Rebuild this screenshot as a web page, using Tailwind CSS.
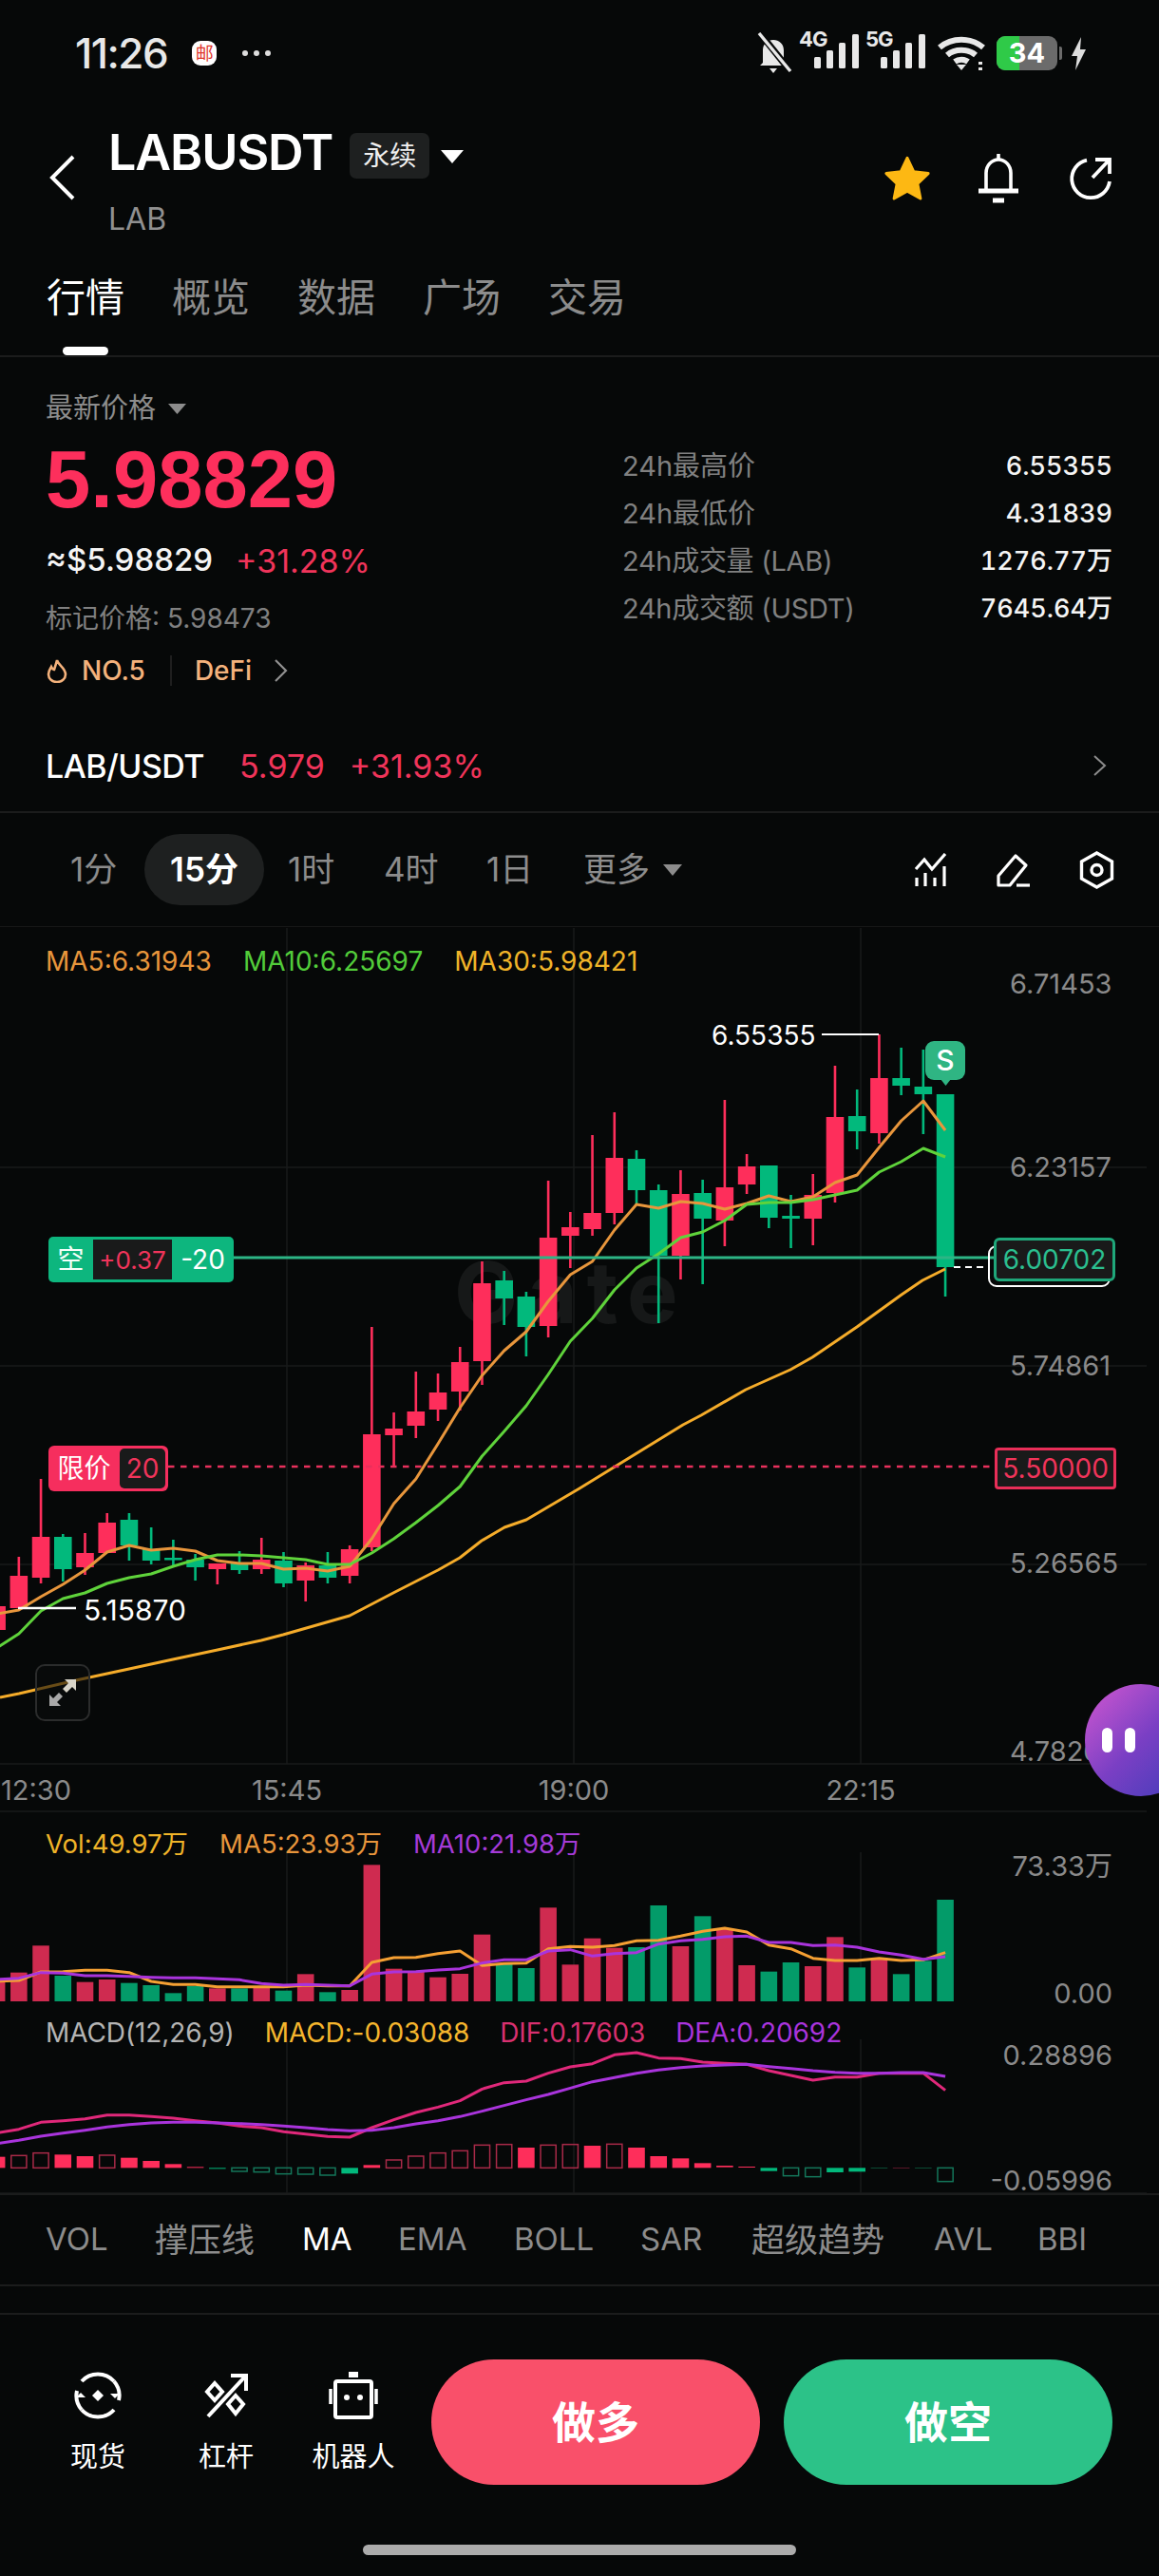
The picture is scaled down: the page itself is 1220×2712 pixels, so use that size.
<!DOCTYPE html>
<html lang="zh">
<head>
  <meta charset="UTF-8">
  <meta name="viewport" content="width=device-width, initial-scale=1.0">
  <title>LABUSDT</title>
  <script src="https://cdn.jsdelivr.net/npm/@tailwindcss/browser@4"></script>
</head>
<body class="bg-[#060808]">
  <div class="relative w-[1220px] h-[2712px] overflow-hidden bg-[#060808] text-white font-[Inter,'Noto_Sans_CJK_SC',sans-serif]">

    <!-- status bar -->
    <div class="flex items-center h-[112px] pl-[79px] pr-[76px]">
      <span class="text-[44px] font-medium tracking-[-1.5px] text-[#e8e8e8]">11:26</span>
      <span class="ml-[26px] flex items-center justify-center w-[26px] h-[26px] rounded-[9px] bg-white text-[#e0352b] text-[19px] leading-none">邮</span>
      <svg class="ml-[26px]" width="32" height="8" viewBox="0 0 32 8" fill="#ddd"><circle cx="4" cy="4" r="3"/><circle cx="16" cy="4" r="3"/><circle cx="28" cy="4" r="3"/></svg>
      <div class="ml-auto flex items-center">
        <svg width="40" height="44" viewBox="0 0 40 44" fill="none" stroke="#e8e8e8">
          <path d="M7 32V19c0-7 5-11 11-11s11 4 11 11v13l3 3H4z" fill="#e8e8e8" stroke="none"/>
          <path d="M14 38h8l-4 5z" fill="#e8e8e8" stroke="none"/>
          <path d="M4 1l32 40" stroke="#060808" stroke-width="7"/>
          <path d="M3 1l33 40" stroke-width="3.4"/>
        </svg>
        <div class="relative ml-[5px] w-[63px] h-[40px]">
          <span class="absolute left-0 top-[-6px] text-[22px] font-bold leading-none tracking-[-1px] text-[#e8e8e8]">4G</span>
          <svg class="absolute left-[16px] top-0" width="48" height="36" viewBox="0 0 48 36" fill="#e8e8e8"><rect x="0" y="24" width="7" height="12" rx="1.5"/><rect x="13" y="17" width="7" height="19" rx="1.5"/><rect x="26" y="9" width="7" height="27" rx="1.5"/><rect x="40" y="0" width="7" height="36" rx="1.5"/></svg>
        </div>
        <div class="relative ml-[7px] w-[63px] h-[40px]">
          <span class="absolute left-0 top-[-6px] text-[22px] font-bold leading-none tracking-[-1px] text-[#e8e8e8]">5G</span>
          <svg class="absolute left-[16px] top-0" width="48" height="36" viewBox="0 0 48 36" fill="#e8e8e8"><rect x="0" y="24" width="7" height="12" rx="1.5"/><rect x="13" y="17" width="7" height="19" rx="1.5"/><rect x="26" y="9" width="7" height="27" rx="1.5"/><rect x="40" y="0" width="7" height="36" rx="1.5"/></svg>
        </div>
        <svg class="ml-[11px]" width="54" height="36" viewBox="0 0 52 36" fill="none" stroke="#e8e8e8" stroke-width="6">
          <path d="M3 12c13-11 33-11 46 0"/>
          <path d="M11 20c8-7 22-7 30 0"/>
          <path d="M19 27c4-3 10-3 14 0"/>
          <path d="M26 36l-5-6h10z" fill="#e8e8e8" stroke="none"/>
          <path d="M46 27v3M46 33v3" stroke-width="4"/>
        </svg>
        <div class="relative ml-[10px] w-[64px] h-[36px] rounded-[9px] bg-[#6b6b6b] overflow-hidden">
          <div class="h-full w-[24px] bg-[#2fca48]"></div>
          <span class="absolute inset-0 flex items-center justify-center text-[29px] font-bold text-white">34</span>
        </div>
        <div class="w-[3px] h-[14px] ml-[2px] rounded-r-[2px] bg-[#6b6b6b]"></div>
        <svg class="ml-[9px]" width="17" height="35" viewBox="0 0 17 35" fill="#ddd"><path d="M11 0L1 20h6L5 35 16 13h-6z"/></svg>
      </div>
    </div>

    <!-- title row -->
    <div class="relative h-[144px]">
      <svg class="absolute left-[50px] top-[50px]" width="32" height="50" viewBox="0 0 32 50" fill="none" stroke="white" stroke-width="4"><path d="M27 3L5 25l22 22"/></svg>
      <div class="absolute right-[49px] top-[50px] flex items-center">
        <svg width="52" height="50" viewBox="0 0 24 23" fill="#fdb813" stroke="#fdb813" stroke-width="1.4" stroke-linejoin="round"><path d="M12 1.5l3.1 6.6 7.1.9-5.2 5 1.4 7.2-6.4-3.6-6.4 3.6 1.4-7.2-5.2-5 7.1-.9z"/></svg>
        <svg class="ml-[48px]" width="44" height="52" viewBox="0 0 44 52" fill="none" stroke="white" stroke-width="3.6"><path d="M22 0v6"/><path d="M9 38V20a13 14 0 0 1 26 0v18"/><path d="M1 39h42" stroke-width="5"/><path d="M16 49h12" stroke-width="5"/></svg>
        <svg class="ml-[52px]" width="46" height="46" viewBox="0 0 46 46" fill="none" stroke="white" stroke-width="3.8"><path d="M19 3.6A20 20 0 1 0 43 26"/><path d="M25 22L42 4"/><path d="M28 3h15v15"/></svg>
      </div>
      <div class="flex items-start pl-[114px]">
        <div class="pt-[19px]">
          <div class="text-[52px] leading-[60px] font-semibold tracking-[-1.1px]">LABUSDT</div>
          <div class="mt-[20px] text-[32px] leading-[40px] text-[#909090]">LAB</div>
        </div>
        <div class="ml-[18px] mt-[28px] flex items-center justify-center w-[84px] h-[48px] rounded-[7px] bg-[#1e2020] text-[28px] text-[#f0f0f0]">永续</div>
        <svg class="ml-[12px] mt-[46px]" width="24" height="14" viewBox="0 0 24 14" fill="white"><path d="M0 0h24L12 14z"/></svg>
      </div>
    </div>

    <!-- tabs -->
    <div class="relative flex h-[120px] pl-[49px] gap-[50px] border-b-2 border-[#1b1c1c] text-[41px] leading-[50px] pt-[32px] text-[#8c8c8c]">
      <span class="text-white">行情</span><span>概览</span><span>数据</span><span>广场</span><span>交易</span>
      <div class="absolute left-[66px] bottom-[0px] w-[48px] h-[9px] rounded-full bg-white"></div>
    </div>

    <!-- price + 24h stats -->
    <div class="flex h-[399px] pl-[48px] pr-[49px]">
      <div class="w-[607px] pt-[36px]">
        <div class="flex items-center h-[36px] text-[29px] text-[#8c8c8c]">最新价格
          <svg class="ml-[13px]" width="19" height="11" viewBox="0 0 19 11" fill="#8c8c8c"><path d="M0 0h19L9.500 11z"/></svg>
        </div>
        <div class="mt-[7px] h-[100px] leading-[100px] text-[85px] font-bold font-['Liberation_Sans'] text-[#fd2f5c]">5.98829</div>
        <div class="mt-[15px] flex items-center h-[40px] text-[33px]">
          <span class="font-medium text-[#f4f4f4]">≈$5.98829</span>
          <span class="ml-[24px] text-[34px] text-[#f0345a]">+31.28%</span>
        </div>
        <div class="mt-[23px] h-[36px] leading-[36px] text-[28px] text-[#808080]">标记价格: 5.98473</div>
        <div class="mt-[19px] flex items-center h-[36px] text-[28px] font-medium text-[#f4b27c]">
          <svg width="24" height="26" viewBox="0 0 24 26" fill="none" stroke="#f4b27c" stroke-width="2.6"><path d="M12 2c1 5 9 8 9 15a9 8 0 0 1-18 0c0-4 2-6 3-8 1 2 2 3 3 3 1-3 2-6 3-10z"/></svg>
          <span class="ml-[14px]">NO.5</span>
          <div class="ml-[26px] w-[2px] h-[32px] bg-[#1f1f1f]"></div>
          <span class="ml-[24px]">DeFi</span>
          <svg class="ml-[23px]" width="15" height="24" viewBox="0 0 15 24" fill="none" stroke="#909090" stroke-width="2.2"><path d="M2 1l11 11L2 23"/></svg>
        </div>
      </div>
      <div class="flex-1 pt-[90px] text-[29px]">
        <div class="flex items-center justify-between h-[50px]"><span class="text-[#808080]">24h最高价</span><span class="text-[27px] font-medium tabular-nums text-[#f4f4f4]">6.55355</span></div>
        <div class="flex items-center justify-between h-[50px]"><span class="text-[#808080]">24h最低价</span><span class="text-[27px] font-medium tabular-nums text-[#f4f4f4]">4.31839</span></div>
        <div class="flex items-center justify-between h-[50px]"><span class="tracking-[-0.3px] text-[#808080]">24h成交量 (LAB)</span><span class="text-[27px] font-medium tabular-nums text-[#f4f4f4]">1276.77万</span></div>
        <div class="flex items-center justify-between h-[50px]"><span class="tracking-[-0.3px] text-[#808080]">24h成交额 (USDT)</span><span class="text-[27px] font-medium tabular-nums text-[#f4f4f4]">7645.64万</span></div>
      </div>
    </div>

    <!-- spot row -->
    <div class="flex items-center h-[81px] pl-[48px] pr-[55px] pb-[17px] border-b-2 border-[#1b1c1c] text-[34px]">
      <span class="font-medium tracking-[-0.5px]">LAB/USDT</span>
      <span class="ml-[37px] text-[#f0345a]">5.979</span>
      <span class="ml-[26px] text-[#f0345a]">+31.93%</span>
      <svg class="ml-auto" width="15" height="22" viewBox="0 0 15 22" fill="none" stroke="#8c8c8c" stroke-width="2"><path d="M2 1l11 10L2 21"/></svg>
    </div>

    <!-- timeframes -->
    <div class="flex items-center h-[120px] border-b border-[#161717] text-[35px] text-[#8c8c8c]">
      <span class="ml-[74px] w-[52px]">1分</span>
      <span class="ml-[26px] w-[126px] h-[75px] flex items-center justify-center rounded-full bg-[#1e2020] font-semibold text-white">15分</span>
      <span class="ml-[25px] w-[53px]">1时</span>
      <span class="ml-[48px] w-[58px]">4时</span>
      <span class="ml-[50px] w-[52px]">1日</span>
      <span class="ml-[50px]">更多</span>
      <svg class="ml-[14px]" width="20" height="12" viewBox="0 0 20 12" fill="#8c8c8c"><path d="M0 0h20L10 12z"/></svg>
      <svg class="ml-auto" width="36" height="36" viewBox="0 0 36 36" fill="none" stroke="white" stroke-width="3.2"><path d="M2 17l9-10 8 10L33 1"/><path d="M3 26v9M12 21v14M22 26v9M32 14v21"/></svg>
      <svg class="ml-[50px]" width="38" height="36" viewBox="0 0 38 36" fill="none" stroke="white" stroke-width="3.2" stroke-linejoin="round"><path d="M3 34V24L21 3l11 10-17 21z"/><path d="M22 34h14"/></svg>
      <svg class="ml-[50px] mr-[47px]" width="37" height="40" viewBox="0 0 37 40" fill="none" stroke="white" stroke-width="3.4"><path d="M18.500 2l16 9v18l-16 9-16-9V11z"/><circle cx="18.500" cy="20" r="5.500"/></svg>
    </div>

    <!-- candles -->
    <div class="relative h-[931px]">
      <svg id="main-chart" class="absolute inset-0 overflow-visible" width="1220" height="931" viewBox="0 976 1220 931"></svg>
      <div class="absolute left-[48px] top-[19px] flex gap-[33px] text-[28px] leading-[34px]">
        <span class="text-[#e8963c]">MA5:6.31943</span><span class="text-[#52cc3a]">MA10:6.25697</span><span class="text-[#f0b429]">MA30:5.98421</span>
      </div>
      <div class="absolute left-[51px] top-[326px] flex items-center w-[195px] h-[48px] rounded-[5px] bg-[#0db67e] text-[28px]">
        <span class="w-[47px] text-center text-[#f4fff9]">空</span>
        <span class="w-[83px] h-[42px] flex items-center justify-center bg-[#191a1a] text-[#f0345a] text-[26px]">+0.37</span>
        <span class="flex-1 text-center">-20</span>
      </div>
      <div class="absolute left-[1046px] top-[327px] flex items-center justify-center w-[128px] h-[46px] rounded-[6px] border-[3px] border-[#1fa77a] bg-[#191a1a] text-[28px] text-[#2bbf8f]">6.00702</div>
      <div class="absolute left-[51px] top-[546px] flex items-center w-[126px] h-[48px] rounded-[6px] bg-[#f62e5e] text-[28px]">
        <span class="w-[75px] text-center">限价</span>
        <span class="w-[48px] h-[42px] flex items-center justify-center rounded-[5px] bg-[#191a1a] text-[#f0345a]">20</span>
      </div>
      <div class="absolute left-[1047px] top-[548px] flex items-center justify-center w-[128px] h-[44px] rounded-[4px] border-[3px] border-[#e82e58] bg-[#191a1a] text-[28px] text-[#f0345a]">5.50000</div>
      <div class="absolute left-[974px] top-[120px] flex items-center justify-center w-[42px] h-[41px] rounded-[9px] bg-[#2fb583] text-[30px] font-medium">S</div>
      <div class="absolute left-[37px] top-[776px] flex items-center justify-center w-[58px] h-[60px] rounded-[10px] border-2 border-[#2b2c2c] bg-[#0a0c0c]/60">
        <svg width="30" height="30" viewBox="0 0 30 30" fill="#a8a8a8"><path d="M29 1v12l-4-4-6 6-4-4 6-6-4-4z" fill="#d8d4c8"/><path d="M1 29V17l4 4 6-6 4 4-6 6 4 4z"/></svg>
      </div>
      <div class="absolute left-[1142px] top-[797px] flex items-center pl-[18px] gap-[13px] w-[118px] h-[118px] rounded-full bg-gradient-to-br from-[#d455d0] via-[#7a3fc4] to-[#3a3ab8]">
        <div class="w-[11px] h-[26px] rounded-full bg-white"></div>
        <div class="w-[11px] h-[26px] rounded-full bg-white"></div>
      </div>
    </div>

    <!-- volume -->
    <div class="relative h-[211px]">
      <svg id="vol-chart" class="absolute inset-0 overflow-visible" width="1220" height="211" viewBox="0 1907 1220 211"></svg>
      <div class="absolute left-[48px] top-[17px] flex gap-[33px] text-[27.500px] leading-[34px]">
        <span class="text-[#f0b429]">Vol:49.97万</span><span class="text-[#e8963c]">MA5:23.93万</span><span class="text-[#a53bd8]">MA10:21.98万</span>
      </div>
    </div>

    <!-- macd -->
    <div class="relative h-[191px]">
      <svg id="macd-chart" class="absolute inset-0 overflow-visible" width="1220" height="191" viewBox="0 2118 1220 191"></svg>
      <div class="absolute left-[48px] top-[5px] flex gap-[32px] text-[28px] tracking-[-0.1px] leading-[34px]">
        <span class="text-[#b4b4b4]">MACD(12,26,9)</span><span class="text-[#f5b52d]">MACD:-0.03088</span><span class="text-[#d8306f]">DIF:0.17603</span><span class="text-[#a934dc]">DEA:0.20692</span>
      </div>
    </div>

    <!-- indicators -->
    <div class="relative h-[98px] border-y-2 border-[#1b1c1c] text-[33px] text-[#8c8c8c]">
      <div class="flex items-center h-full pl-[48px]">
        <span class="w-[115px]">VOL</span>
        <span class="w-[155px] text-[35px]">撑压线</span>
        <span class="w-[101px] text-white">MA</span>
        <span class="w-[122px]">EMA</span>
        <span class="w-[133px]">BOLL</span>
        <span class="w-[117px]">SAR</span>
        <span class="w-[192px] text-[35px]">超级趋势</span>
        <span class="w-[109px]">AVL</span>
        <span>BBI</span>
      </div>
    </div>

    <!-- bottom actions -->
    <div class="mt-[28px] border-t-2 border-[#1b1c1c] pt-[47px]">
      <div class="flex pl-[53px] pr-[49px]">
        <div class="flex flex-col items-center w-[100px] pt-[13px] text-[29px]">
          <svg width="50" height="50" viewBox="0 0 50 50" fill="none" stroke="white" stroke-width="4"><path d="M8 10A23 23 0 0 1 42 10"/><path d="M42 40A23 23 0 0 1 8 40"/><path d="M3 20a23 23 0 0 0 5 20" /><path d="M47 30a23 23 0 0 0-5-20"/><path d="M25 19l6 6-6 6-6-6z" fill="white" stroke="none"/><path d="M2 27l5-5 5 5z" fill="white" stroke="none"/><path d="M38 23l5 5 5-5z" fill="white" stroke="none"/></svg>
          <span class="mt-[25px] leading-[30px]">现货</span>
        </div>
        <div class="flex flex-col items-center w-[100px] ml-[35px] pt-[13px] text-[29px]">
          <svg width="50" height="50" viewBox="0 0 50 50" fill="none" stroke="white" stroke-width="4"><path d="M6 47L44 6"/><path d="M30 4h16v16"/><path d="M13 12l8 9-8 9-8-9z"/><path d="M35 25l8 9-8 10-8-10z"/></svg>
          <span class="mt-[25px] leading-[30px]">杠杆</span>
        </div>
        <div class="flex flex-col items-center w-[100px] ml-[34px] pt-[13px] text-[29px]">
          <svg width="52" height="50" viewBox="0 0 52 50" fill="none" stroke="white" stroke-width="4"><path d="M21 0h10v6H21z" fill="white" stroke="none"/><rect x="7" y="10" width="38" height="38" rx="2"/><circle cx="19" cy="27" r="3" fill="white" stroke="none"/><circle cx="33" cy="27" r="3" fill="white" stroke="none"/><path d="M2 18v16M50 18v16" stroke-width="3.5"/></svg>
          <span class="mt-[25px] leading-[30px] whitespace-nowrap">机器人</span>
        </div>
        <button class="ml-[32px] w-[346px] h-[132px] rounded-[66px] bg-[#f9506a] text-[46px] font-bold text-white">做多</button>
        <button class="ml-[25px] w-[346px] h-[132px] rounded-[66px] bg-[#2cc288] text-[46px] font-bold text-white">做空</button>
      </div>
      <div class="ml-[382px] mt-[63px] w-[456px] h-[11px] rounded-full bg-[#ababab]"></div>
    </div>
  </div>

  <script>
    const RED = '#fe2e5b', GREEN = '#02b97c';
    const cx = i => 19.84 + 23.22 * i;

    // wick top, body top, body bottom, wick bottom, from index -1
    const candles = [
      ['r',1691,1691,1716,1716],['r',1639,1659,1693,1693],['r',1557,1618,1661,1667],['g',1615,1618,1652,1665],
      ['r',1614,1635,1650,1658],['r',1593,1603,1635,1635],['g',1593,1600,1627,1643],['g',1608,1631,1643,1647],
      ['g',1621,1640,1642,1648],['g',1636,1642,1650,1664],['r',1646,1646,1652,1668],['g',1633,1645,1653,1657],
      ['r',1619,1642,1652,1657],['g',1634,1643,1667,1671],['r',1645,1648,1664,1686],['g',1634,1648,1661,1667],
      ['r',1627,1631,1659,1667],['r',1397,1510,1629,1633],['r',1487,1504,1511,1544],['r',1444,1486,1501,1514],
      ['r',1446,1466,1484,1496],['r',1418,1434,1465,1485],['r',1328,1351,1433,1458],['g',1338,1348,1367,1395],
      ['g',1360,1365,1397,1428],['r',1243,1303,1396,1408],['r',1276,1292,1301,1335],['r',1195,1277,1294,1301],
      ['r',1171,1219,1277,1289],['g',1211,1220,1253,1268],['g',1247,1253,1322,1393],['r',1232,1257,1322,1347],
      ['g',1242,1256,1283,1352],['r',1158,1250,1285,1312],['r',1215,1228,1247,1257],['g',1227,1227,1282,1293],
      ['g',1258,1280,1283,1314],['r',1236,1258,1283,1311],['r',1122,1176,1256,1266],['g',1147,1175,1191,1210],
      ['r',1089,1135,1193,1204],['g',1103,1135,1143,1153],['g',1105,1144,1152,1194],['g',1152,1152,1334,1365]
    ];
    const ma5 = [1699,1695,1681,1668,1653,1634,1627,1632,1630,1633,1643,1646,1646,1652,1651,1654,1649,1620,1583,1557,1520,1482,1448,1422,1402,1370,1342,1328,1295,1268,1272,1265,1267,1273,1267,1259,1265,1260,1245,1237,1208,1180,1159,1190];
    const ma10 = [1735,1720,1696,1683,1677,1667,1661,1657,1649,1642,1637,1637,1638,1640,1642,1647,1647,1635,1620,1603,1585,1565,1533,1507,1480,1447,1412,1388,1358,1335,1320,1303,1297,1285,1268,1266,1266,1263,1258,1253,1234,1223,1209,1218];
    const ma30 = [[0,1787],[20,1783],[80,1769],[136,1757],[182,1747],[229,1737],[275,1727],[298,1721],[368,1701],[414,1677],[461,1653],[484,1640],[507,1622],[531,1608],[554,1600],[610,1567],[719,1500],[738,1490],[785,1463],[832,1442],[855,1429],[902,1397],[949,1363],[971,1348],[995,1336]];

    // values below are offsets read from the 3x crop, y = 1880 + z / 3
    const volTop = [620,590,505,600,620,612,623,630,655,633,640,640,638,647,595,652,645,250,578,588,605,594,470,562,576,385,565,482,512,510,378,507,412,450,567,587,558,570,478,574,545,595,553,360];
    const volUp = 'rrrgrrggggrgrgrgrrrrrrrggrrrrgg' + 'rgrrggrrgrggg';
    const volMa5 = [618,615,588,587,583,583,590,618,628,628,635,635,635,635,630,632,632,558,543,542,530,522,568,562,560,515,508,510,505,490,488,475,460,450,462,503,515,545,552,552,545,552,550,527];
    const volMa10 = [612,608,590,592,600,600,602,605,607,607,610,613,625,630,628,630,632,595,588,587,582,578,560,550,550,522,518,538,530,527,500,490,485,477,475,495,495,505,503,510,525,535,548,540];
    const dif = [1097,1085,1063,1058,1052,1040,1040,1045,1050,1058,1065,1075,1080,1093,1100,1108,1110,1080,1055,1032,1015,995,958,938,933,908,888,878,850,843,860,862,873,877,880,900,915,930,920,920,908,908,908,962];
    const dea = [1130,1120,1107,1097,1088,1078,1070,1065,1063,1063,1065,1067,1070,1075,1080,1086,1090,1088,1080,1068,1058,1045,1028,1010,992,975,955,935,922,908,898,890,885,882,880,887,893,900,905,908,908,906,906,918];
    // color, filled, top, bottom
    const hist = [
      ['r',1,1172,1207],['r',0,1168,1207],['r',0,1160,1207],['r',1,1165,1207],['r',1,1170,1207],['r',0,1167,1207],['r',1,1175,1207],['r',1,1185,1207],['r',1,1195,1207],['r',1,1204,1207],
      ['g',1,1207,1209],['g',0,1207,1218],['g',0,1207,1220],['g',0,1207,1226],['g',0,1207,1227],['g',0,1207,1230],['g',1,1207,1225],
      ['r',1,1198,1207],['r',0,1182,1207],['r',0,1170,1207],['r',0,1160,1207],['r',0,1153,1207],['r',0,1135,1207],['r',0,1133,1207],['r',1,1143,1207],['r',0,1135,1207],['r',0,1133,1207],
      ['r',1,1137,1207],['r',0,1132,1207],['r',1,1143,1207],['r',1,1170,1207],['r',1,1177,1207],['r',1,1192,1207],['r',1,1200,1205],['r',1,1203,1205],
      ['g',1,1207,1217],['g',0,1207,1232],['g',0,1207,1235],['g',1,1207,1221],['g',1,1207,1219],['d',1,1206,1207],['e',1,1206,1207],['d',1,1206,1207],['g',0,1207,1250]
    ];

    const rect = (x, y, w, h, fill) => `<rect x="${x}" y="${y}" width="${w}" height="${h}" fill="${fill}"/>`;
    const hline = (y, x1, x2, c = '#191a1a', w = 1.5) => `<line x1="${x1}" x2="${x2}" y1="${y}" y2="${y}" stroke="${c}" stroke-width="${w}"/>`;
    const vline = (x, y1, y2) => `<line x1="${x}" x2="${x}" y1="${y1}" y2="${y2}" stroke="#191a1a" stroke-width="1.5"/>`;
    const poly = (pts, c, w) => `<polyline points="${pts.map(p => p.join(',')).join(' ')}" fill="none" stroke="${c}" stroke-width="${w}" stroke-linejoin="round"/>`;
    const series = (arr, fn) => arr.map((v, i) => [cx(i - 1), fn(v)]);
    const label = (x, y, s, c = '#8a8a8a', anchor = 'start', size = 29) => `<text x="${x}" y="${y}" fill="${c}" font-size="${size}" text-anchor="${anchor}" dominant-baseline="central">${s}</text>`;
    const volY = z => 1880 + z / 3;

    let main = '';
    [302, 604, 906].forEach(x => main += vline(x, 977, 1857));
    [1229, 1438, 1647, 1857].forEach(y => main += hline(y, 0, 1207));
    main += `<text x="478" y="1393" fill="#161818" font-size="90" font-weight="700" letter-spacing="10">Gate</text>`;
    candles.forEach((c, i) => {
      const col = c[0] === 'r' ? RED : GREEN, x = cx(i - 1);
      main += rect(x - 1.3, c[1], 2.6, c[4] - c[1], col);
      main += rect(x - 9.3, c[2], 18.6, Math.max(c[3] - c[2], 2.5), col);
    });
    main += poly(series(ma5, v => v), '#e8963c', 3);
    main += poly(series(ma10, v => v), '#5fd33b', 3);
    main += poly(ma30, '#f5ac2a', 3);
    main += hline(1324, 246, 1046, '#2cb585', 3);
    main += `<line x1="177" x2="1047" y1="1544" y2="1544" stroke="#e8305c" stroke-width="2.6" stroke-dasharray="6.500 6.500"/>`;
    main += `<rect x="1041" y="1312" width="127" height="42" rx="8" fill="none" stroke="#fff" stroke-width="2"/>`;
    main += `<line x1="1004" x2="1041" y1="1334" y2="1334" stroke="#fff" stroke-width="2" stroke-dasharray="7 5"/>`;
    main += `<path d="M990 1136h11l-5.500 7z" fill="#2fb583"/>`;
    main += hline(1089, 865, 925, '#fff', 2) + label(749, 1090, '6.55355', '#fff', 'start', 28);
    main += hline(1693, 19, 80, '#fff', 2.4) + label(88, 1695, '5.15870', '#fff', 'start', 30);
    main += label(1063, 1035, '6.71453') + label(1063, 1228, '6.23157') + label(1063, 1437, '5.74861') + label(1063, 1645, '5.26565') + label(1063, 1843, '4.78269');
    [[38, '12:30'], [302, '15:45'], [604, '19:00'], [906, '22:15']].forEach(t => main += label(t[0], 1884, t[1], '#8a8a8a', 'middle'));
    document.getElementById('main-chart').innerHTML = main;

    let vol = hline(1907, 0, 1207);
    [302, 604, 906].forEach(x => vol += vline(x, 1950, 2107));
    volTop.forEach((z, i) => {
      const y = volY(z);
      vol += rect(cx(i - 1) - 8.8, y, 17.6, 2107 - y, volUp[i] === 'r' ? '#cf2b50' : '#039b69');
    });
    vol += poly(series(volMa5, volY), '#f5a033', 3) + poly(series(volMa10, volY), '#a934dc', 3);
    vol += label(1171, 1964, '73.33万', '#8a8a8a', 'end') + label(1171, 2098, '0.00', '#8a8a8a', 'end');
    document.getElementById('vol-chart').innerHTML = vol;

    let macd = hline(2309, 0, 1207);
    [302, 604, 906].forEach(x => macd += vline(x, 2147, 2309));
    hist.forEach((h, i) => {
      const col = { r: RED, g: GREEN, d: '#0a4a33', e: '#5a1528' }[h[0]];
      const edge = h[0] === 'r' ? '#a82a48' : '#14765a';
      const x = cx(i - 1) - 8.8, y = volY(h[2]), ht = (h[3] - h[2]) / 3;
      macd += h[1] ? rect(x, y, 17.6, Math.max(ht, 1), col)
        : `<rect x="${x + 0.7}" y="${y}" width="16.2" height="${ht}" fill="none" stroke="${edge}" stroke-width="1.5"/>`;
    });
    macd += poly(series(dif, volY), '#e0287a', 3) + poly(series(dea, volY), '#a934dc', 3);
    macd += label(1171, 2163, '0.28896', '#8a8a8a', 'end') + label(1171, 2295, '-0.05996', '#8a8a8a', 'end');
    document.getElementById('macd-chart').innerHTML = macd;
  </script>
</body>
</html>
